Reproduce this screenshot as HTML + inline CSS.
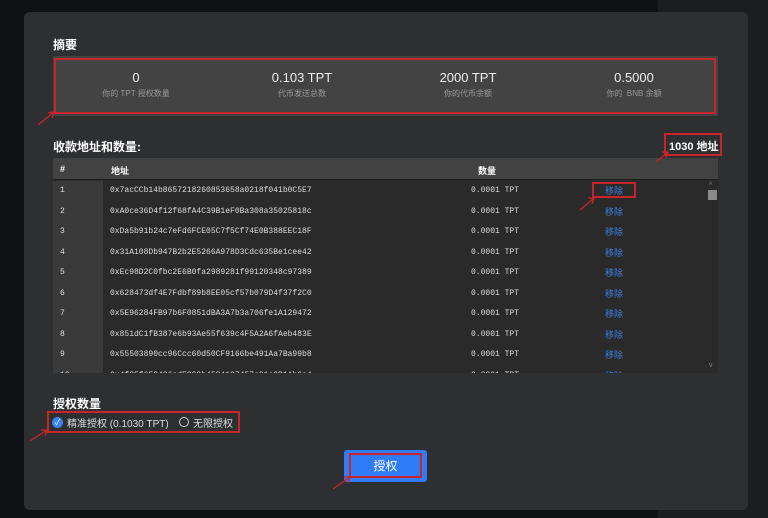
<!DOCTYPE html>
<html><head><meta charset="utf-8"><style>
*{margin:0;padding:0;box-sizing:border-box}
body{width:768px;height:518px;background:#0f1114;position:relative;overflow:hidden;font-family:"Liberation Sans","Noto Sans CJK SC",sans-serif;color:#fff}
.rt{position:absolute;left:658px;top:0;width:110px;height:518px;background:#1b1d21}
.modal{position:absolute;left:24px;top:12px;width:724px;height:498px;background:#2e2f31;border-radius:6px}
.abs{position:absolute}
.h{font-size:12px;font-weight:bold;color:#fff}
.sum{left:53px;top:56px;width:665px;height:60px;background:#434343}
.st{position:absolute;top:70px;width:166px;text-align:center;font-size:13px;color:#eee}
.ss{position:absolute;top:88px;width:166px;text-align:center;font-size:8px;color:#9a9a9a}
.red{position:absolute;border:2px solid #c8242b}
.tbl{left:53px;top:158px;width:665px;height:215px;background:#2a2a2b;overflow:hidden}
.thead{position:absolute;left:0;top:0;width:665px;height:22px;background:#424242;border-bottom:1px solid #1f1f1f;font-size:9px;font-weight:bold}
.numcol{position:absolute;left:0;top:23px;width:50px;height:200px;background:#3a3a3a}
.row{position:absolute;left:0;height:20px;width:653px;font-size:8px;font-family:"Liberation Mono","DejaVu Sans Mono",monospace;color:#ddd;line-height:22px}
.row span{position:absolute}
.rm{color:#3c7ee0;font-family:"Liberation Sans","Noto Sans CJK SC",sans-serif;font-size:9px}
.sb{position:absolute;left:653px;top:23px;width:12px;height:192px;background:#2a2a2b}
.btn{left:344px;top:450px;width:83px;height:32px;background:#2f7cf6;border-radius:3px;font-size:12px;text-align:center;line-height:32px}
</style></head><body>
<div class="rt"></div>
<div class="modal"></div>
<div class="abs h" style="left:53px;top:36px">摘要</div>
<div class="abs sum"></div>
<div class="red" style="left:54px;top:58px;width:662px;height:56px"></div>
<div class="st" style="left:53px">0</div><div class="ss" style="left:53px">你的 TPT 授权数量</div>
<div class="st" style="left:219px">0.103 TPT</div><div class="ss" style="left:219px">代币发送总数</div>
<div class="st" style="left:385px">2000 TPT</div><div class="ss" style="left:385px">你的代币余额</div>
<div class="st" style="left:551px">0.5000</div><div class="ss" style="left:551px">你的 &nbsp;BNB 余额</div>
<div class="abs h" style="left:53px;top:138px">收款地址和数量:</div>
<div class="abs h" style="left:669px;top:138px;font-size:11px">1030 地址</div>
<div class="red" style="left:664px;top:133px;width:58px;height:23px"></div>
<div class="abs tbl">
<div class="thead"><span class="abs" style="left:7px;top:6px">#</span><span class="abs" style="left:58px;top:6px">地址</span><span class="abs" style="left:425px;top:6px">数量</span></div>
<div class="numcol"></div>
<div class="row" style="top:22px"><span style="left:7px">1</span><span style="left:57px">0x7acCCb14b8657218260853658a0218f041b0C5E7</span><span style="left:418px">0.0001 TPT</span><span class="rm" style="left:552px">移除</span></div>
<div class="row" style="top:43px"><span style="left:7px">2</span><span style="left:57px">0xA0ce36D4f12f68fA4C39B1eF0Ba308a35025818c</span><span style="left:418px">0.0001 TPT</span><span class="rm" style="left:552px">移除</span></div>
<div class="row" style="top:63px"><span style="left:7px">3</span><span style="left:57px">0xDa5b91b24c7eFd6FCE05C7f5Cf74E0B388EEC18F</span><span style="left:418px">0.0001 TPT</span><span class="rm" style="left:552px">移除</span></div>
<div class="row" style="top:84px"><span style="left:7px">4</span><span style="left:57px">0x31A108Db947B2b2E5266A978D3Cdc635Be1cee42</span><span style="left:418px">0.0001 TPT</span><span class="rm" style="left:552px">移除</span></div>
<div class="row" style="top:104px"><span style="left:7px">5</span><span style="left:57px">0xEc98D2C0fbc2E6B0fa2989281f99120348c97389</span><span style="left:418px">0.0001 TPT</span><span class="rm" style="left:552px">移除</span></div>
<div class="row" style="top:125px"><span style="left:7px">6</span><span style="left:57px">0x628473df4E7Fdbf89b8EE05cf57b079D4f37f2C0</span><span style="left:418px">0.0001 TPT</span><span class="rm" style="left:552px">移除</span></div>
<div class="row" style="top:145px"><span style="left:7px">7</span><span style="left:57px">0x5E96284FB97b6F0851dBA3A7b3a706fe1A129472</span><span style="left:418px">0.0001 TPT</span><span class="rm" style="left:552px">移除</span></div>
<div class="row" style="top:166px"><span style="left:7px">8</span><span style="left:57px">0x851dC1fB387e6b93Ae55f639c4F5A2A6fAeb483E</span><span style="left:418px">0.0001 TPT</span><span class="rm" style="left:552px">移除</span></div>
<div class="row" style="top:186px"><span style="left:7px">9</span><span style="left:57px">0x55503890cc96Ccc60d50CF9166be491Aa7Ba99b8</span><span style="left:418px">0.0001 TPT</span><span class="rm" style="left:552px">移除</span></div>
<div class="row" style="top:207px"><span style="left:7px">10</span><span style="left:57px">0x4f85f6F8436cdE999b4584127457c01c0B1Ab6a4</span><span style="left:418px">0.0001 TPT</span><span class="rm" style="left:552px">移除</span></div>
<div class="sb"><div style="position:absolute;left:2px;top:9px;width:9px;height:10px;background:#8a8a8a"></div>
<div style="position:absolute;left:3px;top:1px;font-size:7px;color:#888">^</div><div style="position:absolute;left:3px;top:181px;font-size:7px;color:#888">v</div></div>
</div>
<div class="red" style="left:592px;top:182px;width:44px;height:16px"></div>
<div class="abs h" style="left:53px;top:395px">授权数量</div>
<div class="abs" style="left:52px;top:417px;width:11px;height:11px;border-radius:50%;background:#3b82f6;color:#fff;font-size:8px;line-height:11px;text-align:center">✓</div>
<div class="abs" style="left:67px;top:415px;font-size:10px;color:#ddd">精准授权 (0.1030 TPT)</div>
<div class="abs" style="left:179px;top:417px;width:10px;height:10px;border-radius:50%;border:1px solid #ccc"></div>
<div class="abs" style="left:193px;top:415px;font-size:10px;color:#ddd">无限授权</div>
<div class="red" style="left:47px;top:411px;width:193px;height:22px"></div>
<div class="abs btn">授权</div>
<div class="red" style="left:349px;top:453px;width:73px;height:25px"></div>
<svg class="abs" style="left:0;top:0" width="768" height="518">
<g stroke="#c8242b" stroke-width="1.3" fill="none">
<path d="M38 125 L54 112 M48 113 L54 112 L52 118"/>
<path d="M656 162 L668 152 M662 152 L668 152 L666 158"/>
<path d="M580 210 L594 198 M588 198 L594 198 L592 204"/>
<path d="M30 441 L47 430 M41 430 L47 430 L45 436"/>
<path d="M333 489 L350 477 M344 477 L350 477 L348 483"/>
</g></svg>
</body></html>
